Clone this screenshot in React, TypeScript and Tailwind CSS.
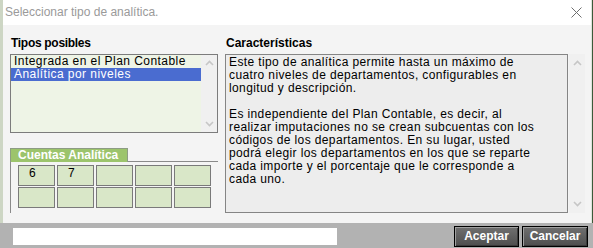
import React from "react";

const Chevron = ({ up }: { up?: boolean }) => (
  <svg width="9" height="6" viewBox="0 0 9 6" className="block">
    <path
      d={up ? "M1 5 L4.5 1.5 L8 5" : "M1 1 L4.5 4.5 L8 1"}
      fill="none"
      stroke="#c6c6c6"
      strokeWidth="1.6"
    />
  </svg>
);

const textLines = [
  "Este tipo de analítica permite hasta un máximo de",
  "cuatro niveles de departamentos, configurables en",
  "longitud y descripción.",
  "",
  "Es independiente del Plan Contable, es decir, al",
  "realizar imputaciones no se crean subcuentas con los",
  "códigos de los departamentos. En su lugar, usted",
  "podrá elegir los departamentos en los que se reparte",
  "cada importe y el porcentaje que le corresponde a",
  "cada uno.",
];

const cells = ["6", "7", "", "", "", "", "", "", "", ""];

export default function App() {
  const sans = { fontFamily: '"Liberation Sans", Arial, sans-serif' };
  return (
    <div className="w-[593px] h-[248px] flex flex-col overflow-hidden bg-[#b2b2b2]" style={sans}>
      <div className="flex h-[223px]">
        <div className="w-[3px] bg-[#cdd6c4]" />
        <div className="w-[588px] flex flex-col">
          {/* title bar */}
          <div className="h-[25px] bg-white flex items-center justify-between pl-[2px] pr-[9px]">
            <span className="text-[12px] leading-[14px] text-[#9a9a9a] -mt-[1px]">
              Seleccionar tipo de analítica.
            </span>
            <svg width="11" height="11" viewBox="0 0 11 11" className="block">
              <path d="M0.5 0.5 L10.5 10.5 M10.5 0.5 L0.5 10.5" stroke="#6e6e6e" strokeWidth="1" fill="none" />
            </svg>
          </div>
          {/* body */}
          <div className="flex-1 bg-[#f4f4f4] flex pl-[7px] pt-[11px] text-black">
            {/* left column */}
            <div className="w-[208px] flex flex-col">
              <div className="h-[14px] leading-[14px] text-[12px] font-bold tracking-[-0.3px] pl-[1px] mb-[4px]">
                Tipos posibles
              </div>
              <div className="h-[79px] border border-[#7c7c7c] bg-[#eef4e6] flex">
                <div className="flex-1 pt-[0px] text-[12px] leading-[13px] tracking-[0.45px]">
                  <div className="h-[13px] pl-[3px] whitespace-nowrap">Integrada en el Plan Contable</div>
                  <div className="h-[13px] pl-[3px] whitespace-nowrap bg-[#4a6cd0] text-white">
                    Analítica por niveles
                  </div>
                </div>
                <div className="w-[16px] bg-[#f0f0f0] flex flex-col items-center justify-between py-[5px]">
                  <Chevron up />
                  <Chevron />
                </div>
              </div>
              {/* tab group */}
              <div className="mt-[15px] flex flex-col">
                <div className="flex h-[14px]">
                  <div className="w-[118px] bg-[#9cc46c] border-t border-l border-r border-[#8d9c84] text-white text-[12px] font-bold leading-[13px] pl-[7px] whitespace-nowrap">
                    Cuentas Analítica
                  </div>
                  <div className="flex-1 border-b border-[#8a8a8a]" />
                </div>
                <div className="h-[51px] border-l border-[#8a8a8a] pl-[7px] pt-[3px]">
                  <div className="grid grid-cols-[repeat(5,37px)] grid-rows-[repeat(2,21px)] gap-x-[2px] gap-y-[1px]">
                    {cells.map((c, i) => (
                      <div
                        key={i}
                        className="border border-[#7a7a7a] bg-[#d9e7c8] text-[12px] leading-[13px] pl-[10px] pt-[1px]"
                      >
                        {c}
                      </div>
                    ))}
                  </div>
                </div>
              </div>
            </div>
            {/* right column */}
            <div className="ml-[7px] flex flex-col">
              <div className="h-[14px] leading-[14px] text-[12px] font-bold pl-[1px] mb-[4px]">
                Características
              </div>
              <div className="flex h-[159px]">
                <div className="w-[343px] border border-[#858585] bg-[#ededed] pl-[3px] pt-[1px] text-[12px] leading-[13px] tracking-[0.38px]">
                  {textLines.map((l, i) => (
                    <div key={i} className="h-[13px] whitespace-nowrap">
                      {l}
                    </div>
                  ))}
                </div>
                <div className="ml-[1px] w-[16px] bg-[#f0f0f0] flex flex-col items-center justify-between py-[6px]">
                  <Chevron up />
                  <Chevron />
                </div>
              </div>
            </div>
          </div>
        </div>
        <div className="w-[1px] bg-[#dfe3dc]" />
        <div className="w-[1px] bg-[#3d5a3a]" />
      </div>
      {/* bottom bar */}
      <div className="h-[25px] flex items-center pl-[13px] pr-[5px]">
        <div className="w-[324px] h-[17px] bg-white mt-[1px]" />
        <div className="flex-1" />
        <div className="flex gap-[3px] mt-[2px]">
          <button className="w-[65px] h-[21px] border border-black bg-gradient-to-b from-[#707070] to-[#4e4e4e] shadow-[inset_1px_1px_0_#a0a0a0,inset_-1px_-1px_0_#3a3a3a] text-white text-[12px] font-bold leading-[19px]">
            Aceptar
          </button>
          <button className="w-[66px] h-[21px] border border-black bg-gradient-to-b from-[#707070] to-[#4e4e4e] shadow-[inset_1px_1px_0_#a0a0a0,inset_-1px_-1px_0_#3a3a3a] text-white text-[12px] font-bold leading-[19px]">
            Cancelar
          </button>
        </div>
      </div>
    </div>
  );
}
